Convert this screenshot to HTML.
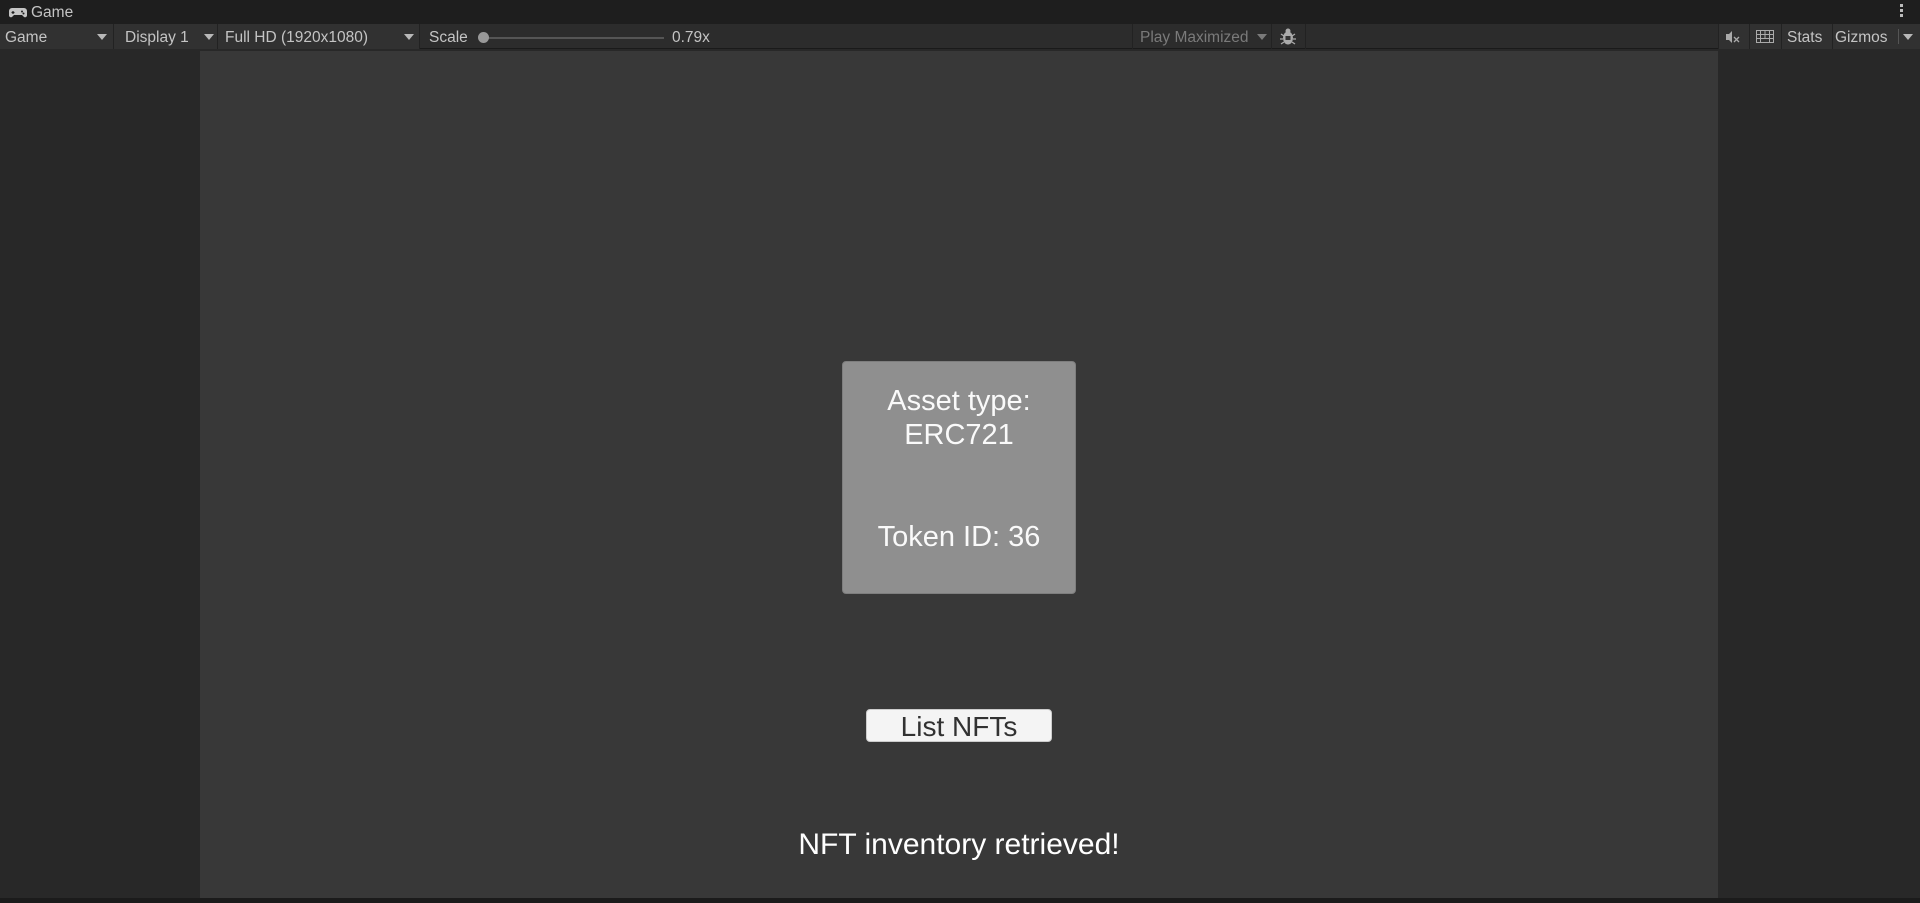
<!DOCTYPE html>
<html><head><style>
*{margin:0;padding:0;box-sizing:border-box}
body{width:1920px;height:903px;background:#282828;position:relative;overflow:hidden;font-family:"Liberation Sans",sans-serif}
.abs{position:absolute}
.tb{color:#c4c4c4;font-size:15.5px;line-height:25px;top:25px;height:25px}
.arrow{width:0;height:0;border-left:5px solid transparent;border-right:5px solid transparent;border-top:6px solid #b8b8b8;top:34px}
.sep{top:24px;width:1px;height:25px;background:#222}
</style></head><body>
<div class="abs" style="left:0;top:0;width:1920px;height:24px;background:#1e1e1e"></div>
<svg class="abs" style="left:9px;top:7px" width="18" height="11" viewBox="0 0 18 11"><path d="M3 1h12a3 3 0 0 1 3 3v4a2 2 0 0 1-3 2l-2-2H5l-2 2a2 2 0 0 1-3-2V4a3 3 0 0 1 3-3z" fill="#c4c4c4"/><path d="M4 4v3M2.5 5.5h3" stroke="#1e1e1e" stroke-width="1.2"/><circle cx="13" cy="4.5" r="1" fill="#1e1e1e"/><circle cx="14.5" cy="6.5" r="1" fill="#1e1e1e"/></svg>
<div class="abs" style="left:31px;top:4px;color:#c4c4c4;font-size:15.5px">Game</div>
<div class="abs" style="left:1900px;top:4px;width:3px;height:3px;background:#bbb;box-shadow:0 5px #bbb,0 10px #bbb"></div>
<div class="abs" style="left:0;top:24px;width:1920px;height:25px;background:#2c2c2c;border-bottom:1px solid #1a1a1a"></div>
<div class="abs" style="left:0;top:24px;width:419px;height:25px;background:#313131"></div>
<div class="abs" style="left:1718px;top:24px;width:210px;height:25px;background:#313131"></div>
<div class="abs tb" style="left:5px">Game</div><div class="abs arrow" style="left:97px"></div><div class="abs sep" style="left:113px"></div>
<div class="abs tb" style="left:125px">Display 1</div><div class="abs arrow" style="left:204px"></div><div class="abs sep" style="left:217px"></div>
<div class="abs tb" style="left:225px">Full HD (1920x1080)</div><div class="abs arrow" style="left:404px"></div><div class="abs sep" style="left:419px"></div>
<div class="abs tb" style="left:429px">Scale</div>
<div class="abs" style="left:484px;top:37px;width:180px;height:2px;background:#555"></div>
<div class="abs" style="left:478px;top:32px;width:11px;height:11px;border-radius:50%;background:#999"></div>
<div class="abs tb" style="left:672px">0.79x</div>
<div class="abs sep" style="left:1132px"></div>
<div class="abs tb" style="left:1140px;color:#7a7a7a">Play Maximized</div><div class="abs arrow" style="left:1257px;border-top-color:#7a7a7a"></div>
<div class="abs sep" style="left:1271px"></div>
<svg class="abs" style="left:1280px;top:27px" width="16" height="19" viewBox="0 0 16 19"><ellipse cx="8" cy="11" rx="5" ry="6.5" fill="#aaa"/><circle cx="8" cy="4" r="2.5" fill="#aaa"/><rect x="5.5" y="9" width="5" height="4" fill="#333"/><path d="M1 7l3 2M15 7l-3 2M0 12h3M16 12h-3M1 17l3-2M15 17l-3-2" stroke="#aaa" stroke-width="1.3"/></svg>
<div class="abs sep" style="left:1305px"></div>
<div class="abs sep" style="left:1718px"></div>
<svg class="abs" style="left:1725px;top:30px" width="16" height="14" viewBox="0 0 16 14"><path d="M1 4h3l3-3v12l-3-3H1z" fill="#aaa"/><path d="M9 7l5 5M14 7l-5 5" stroke="#aaa" stroke-width="1.3"/></svg>
<div class="abs sep" style="left:1749px"></div>
<svg class="abs" style="left:1756px;top:30px" width="18" height="13" viewBox="0 0 18 13"><rect x="0.5" y="0.5" width="17" height="12" fill="none" stroke="#aaa"/><path d="M0 4.5h18M0 8.5h18M4.5 4.5v8M9 0v8.5M13.5 4.5v8M4.5 0v4.5M13.5 0v4.5" stroke="#aaa"/></svg>
<div class="abs sep" style="left:1781px"></div>
<div class="abs tb" style="left:1787px">Stats</div>
<div class="abs sep" style="left:1832px"></div>
<div class="abs tb" style="left:1835px">Gizmos</div>
<div class="abs" style="left:1898px;top:29px;width:1px;height:15px;background:#555"></div>
<div class="abs arrow" style="left:1903px"></div>
<div class="abs" style="left:200px;top:51px;width:1518px;height:847px;background:#383838"></div>
<div class="abs" style="left:0;top:898px;width:1920px;height:5px;background:#1b1b1b"></div>
<div class="abs" style="left:842px;top:361px;width:234px;height:233px;background:#8f8f8f;border:1px solid #7e7e7e;border-radius:4px"></div>
<div class="abs" style="left:842px;top:384px;width:234px;text-align:center;color:#fafafa;font-size:29px;line-height:34px">Asset type:<br>ERC721</div>
<div class="abs" style="left:842px;top:520px;width:234px;text-align:center;color:#fafafa;font-size:29px;line-height:34px">Token ID: 36</div>
<div class="abs" style="left:866px;top:709px;width:186px;height:33px;background:#f4f4f4;border-radius:4px;border:1px solid #ccc"></div>
<div class="abs" style="left:866px;top:709px;width:186px;text-align:center;color:#323232;font-size:28px;line-height:35px">List NFTs</div>
<div class="abs" style="left:700px;top:827px;width:518px;text-align:center;color:#fff;font-size:30px;line-height:36px">NFT inventory retrieved!</div>
</body></html>
